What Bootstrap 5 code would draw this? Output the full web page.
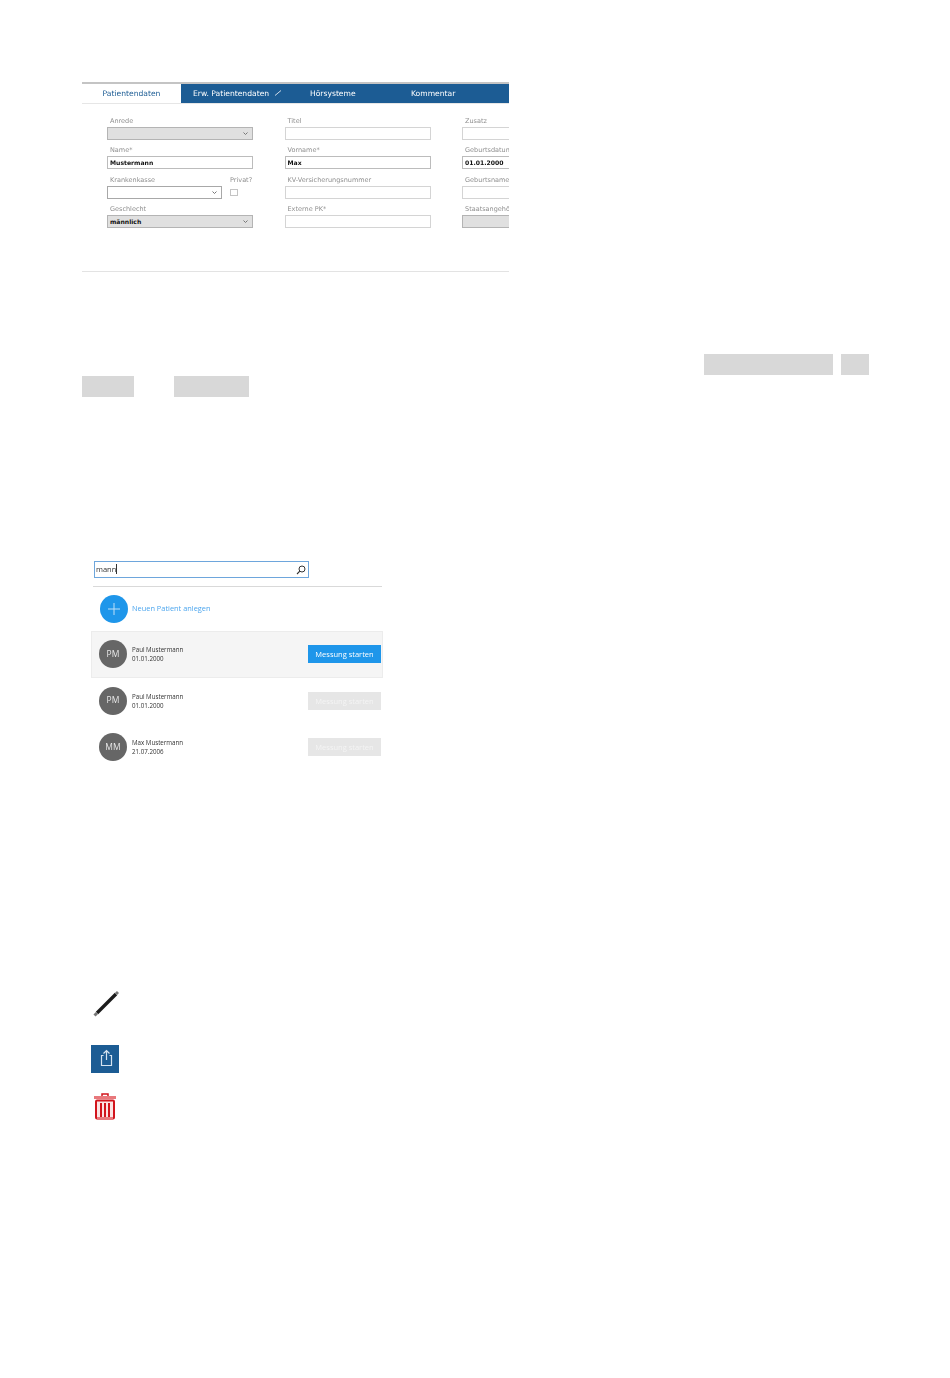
<!DOCTYPE html>
<html lang="de">

<head>
    <meta charset="UTF-8" />
    <meta name="viewport" content="width=device-width, initial-scale=1" />
    <title>Patientendaten</title>
    <link href="https://cdn.jsdelivr.net/npm/bootstrap@5.3.3/dist/css/bootstrap.min.css" rel="stylesheet" />
    <style>
        body {
            background: #fff;
            font-family: "DejaVu Sans", sans-serif;
        }

        .page-wrap {
            padding: 82px 0 0 82px;
        }

        /* the source picture is a scaled down screenshot, so everything is a bit soft */
        .soft-edge {
            filter: blur(0.4px);
        }

        /* Patient form panel */
        .patient-panel {
            width: 427px;
            height: 190px;
            border-bottom: 1px solid #e3e3e3;
            overflow: hidden;
        }

        .tab-strip {
            height: 22px;
            border-top: 2px solid #c4c4c4;
            border-bottom: 1px solid #e6e6e6;
            font-size: 7.6px;
        }

        .tab-first {
            width: 99px;
            color: #1c5c94;
            text-align: center;
            line-height: 19px;
        }

        .tab-rest {
            flex: 1;
            background: #1c5c94;
            color: #fff;
            line-height: 19px;
            position: relative;
        }

        .tab-rest span {
            position: absolute;
            top: 0;
            white-space: nowrap;
        }

        .form-area {
            padding: 12px 0 0 25px;
            display: grid;
            grid-template-columns: 146px 146px 146px;
            column-gap: 31.5px;
            row-gap: 5.3px;
        }

        .fld label {
            display: block;
            font-size: 6.5px;
            line-height: 10px;
            height: 11px;
            padding-left: 3px;
            color: #8f8f8f;
            white-space: nowrap;
        }

        .fld-box {
            height: 13px;
            border: 1px solid #d4d4d4;
            font-size: 6.1px;
            font-weight: 700;
            line-height: 11px;
            padding-left: 2px;
            color: #111;
            position: relative;
            will-change: opacity;
        }

        .fld-box.dark {
            border-color: #bcbcbc;
        }

        .fld-box.combo {
            background: #e0e0e0;
            border-color: #b4b4b4;
        }

        .fld-box.plain-combo {
            border-color: #a8a8a8;
        }

        .caret-mark {
            position: absolute;
            right: 4px;
            top: 3px;
            width: 5px;
            height: 5px;
        }

        .split-fld {
            display: flex;
        }

        .split-fld .fld-main {
            width: 115px;
        }

        .split-fld .fld-side {
            width: 24px;
            margin-left: 7px;
        }

        .split-fld .fld-side label {
            padding-left: 1px;
        }

        .tick-box {
            width: 8px;
            height: 7px;
            border: 1px solid #c4c4c4;
            margin: 3px 0 0 1px;
        }

        /* Redacted text blocks */
        .redact-rows {
            margin-top: 82px;
            width: 787px;
        }

        .redact-line {
            display: flex;
            height: 21px;
            margin-bottom: 1px;
        }

        .redact {
            background: #d8d8d8;
            height: 21px;
        }

        .r-a { width: 129px; margin-left: 622px; }
        .r-b { width: 28px; margin-left: 8px; }
        .r-c { width: 52px; }
        .r-d { width: 75px; margin-left: 40px; }

        /* Patient search */
        .search-panel {
            margin-top: 164px;
            margin-left: 9px;
            width: 292px;
            font-family: "Open Sans", sans-serif;
        }

        .search-box {
            width: 215px;
            height: 17px;
            margin-left: 3px;
            border: 1px solid #6ea6dc;
            font-size: 7.5px;
            line-height: 15px;
            padding: 0 2px 0 1px;
            color: #333;
        }

        .caret-bar {
            display: inline-block;
            width: 1px;
            height: 10px;
            background: #333;
            vertical-align: -2px;
        }

        .search-rule {
            height: 1px;
            background: #d9d9d9;
            margin: 8px 1px 8px 2px;
        }

        .add-row {
            height: 28px;
            padding-left: 9px;
            margin-bottom: 8px;
            color: #4da6ee;
            font-size: 7.4px;
        }

        .add-circle {
            width: 28px;
            height: 28px;
            border-radius: 50%;
            background: #1e96ea;
            margin-right: 4px;
        }

        .person-row {
            height: 46.5px;
            padding: 0 1px 0 7px;
            border: 1px solid transparent;
        }

        .person-row.active-row {
            background: #f5f5f5;
            border-color: #ececec;
        }

        .avatar-dot {
            width: 28px;
            height: 28px;
            border-radius: 50%;
            background: #666;
            color: #e8e8e8;
            font-size: 8.5px;
            margin-right: 5px;
            flex-shrink: 0;
        }

        .person-text {
            font-size: 6.2px;
            line-height: 9px;
            color: #333;
            flex: 1;
        }

        .start-btn {
            width: 73px;
            height: 18px;
            background: #e6e6e6;
            color: #f4f4f4;
            font-size: 7.5px;
            line-height: 18px;
            text-align: center;
        }

        .start-btn.on {
            background: #1e96ea;
            color: #fff;
        }

        /* Icon legend */
        .icon-stack {
            margin-top: 219px;
            margin-left: 9px;
        }

        .pencil-icon {
            display: block;
            width: 28px;
            height: 28px;
        }

        .share-icon {
            display: block;
            width: 28px;
            height: 28px;
            margin-top: 27px;
        }

        .bin-icon {
            display: block;
            width: 22px;
            height: 27px;
            margin: 20px 0 0 3px;
        }
    </style>
</head>

<body>
    <div class="page-wrap">
        <div class="patient-panel soft-edge">
            <div class="tab-strip d-flex">
                <div class="tab-first">Patientendaten</div>
                <div class="tab-rest">
                    <span style="left: 12px">Erw. Patientendaten</span>
                    <svg width="8" height="8" viewBox="0 0 8 8" style="position:absolute;left:93px;top:5px">
                        <path d="M1 6.5 7 1.5" stroke="#cfdbe8" stroke-width="1" />
                    </svg>
                    <span style="left: 129px">Hörsysteme</span>
                    <span style="left: 230px">Kommentar</span>
                </div>
            </div>
            <div class="form-area">
                <div class="fld"><label>Anrede</label>
                    <div class="fld-box combo"><svg class="caret-mark" viewBox="0 0 5 5"><path d="M.5 1.5 2.5 3.5 4.5 1.5" fill="none" stroke="#777" /></svg></div>
                </div>
                <div class="fld"><label>Titel</label>
                    <div class="fld-box"></div>
                </div>
                <div class="fld"><label>Zusatz</label>
                    <div class="fld-box"></div>
                </div>

                <div class="fld"><label>Name*</label>
                    <div class="fld-box dark">Mustermann</div>
                </div>
                <div class="fld"><label>Vorname*</label>
                    <div class="fld-box dark">Max</div>
                </div>
                <div class="fld"><label>Geburtsdatum</label>
                    <div class="fld-box dark">01.01.2000</div>
                </div>

                <div class="fld split-fld">
                    <div class="fld-main"><label>Krankenkasse</label>
                        <div class="fld-box plain-combo"><svg class="caret-mark" viewBox="0 0 5 5"><path d="M.5 1.5 2.5 3.5 4.5 1.5" fill="none" stroke="#777" /></svg></div>
                    </div>
                    <div class="fld-side"><label>Privat?</label>
                        <div class="tick-box"></div>
                    </div>
                </div>
                <div class="fld"><label>KV-Versicherungsnummer</label>
                    <div class="fld-box"></div>
                </div>
                <div class="fld"><label>Geburtsname</label>
                    <div class="fld-box"></div>
                </div>

                <div class="fld"><label>Geschlecht</label>
                    <div class="fld-box combo">männlich<svg class="caret-mark" viewBox="0 0 5 5"><path d="M.5 1.5 2.5 3.5 4.5 1.5" fill="none" stroke="#777" /></svg></div>
                </div>
                <div class="fld"><label>Externe PK*</label>
                    <div class="fld-box"></div>
                </div>
                <div class="fld"><label>Staatsangehörigkeit</label>
                    <div class="fld-box combo"></div>
                </div>
            </div>
        </div>

        <div class="redact-rows">
            <div class="redact-line">
                <div class="redact r-a"></div>
                <div class="redact r-b"></div>
            </div>
            <div class="redact-line">
                <div class="redact r-c"></div>
                <div class="redact r-d"></div>
            </div>
        </div>

        <div class="search-panel soft-edge">
            <div class="search-box d-flex justify-content-between align-items-center">
                <div>mann<span class="caret-bar"></span></div>
                <svg width="10" height="10" viewBox="0 0 10 10">
                    <circle cx="6" cy="4" r="3" fill="none" stroke="#333" />
                    <path d="M3.8 6.2 1 9" stroke="#333" stroke-width="1.1" />
                </svg>
            </div>
            <div class="search-rule"></div>
            <div class="add-row d-flex align-items-center">
                <div class="add-circle d-flex align-items-center justify-content-center">
                    <svg width="12" height="12" viewBox="0 0 12 12">
                        <path d="M6 0V12M0 6H12" stroke="#bfe0f8" stroke-width="1" />
                    </svg>
                </div>
                <div>Neuen Patient anlegen</div>
            </div>
            <div class="person-row active-row d-flex align-items-center">
                <div class="avatar-dot d-flex align-items-center justify-content-center">PM</div>
                <div class="person-text">Paul Mustermann<br />01.01.2000</div>
                <div class="start-btn on">Messung starten</div>
            </div>
            <div class="person-row d-flex align-items-center">
                <div class="avatar-dot d-flex align-items-center justify-content-center">PM</div>
                <div class="person-text">Paul Mustermann<br />01.01.2000</div>
                <div class="start-btn">Messung starten</div>
            </div>
            <div class="person-row d-flex align-items-center">
                <div class="avatar-dot d-flex align-items-center justify-content-center">MM</div>
                <div class="person-text">Max Mustermann<br />21.07.2006</div>
                <div class="start-btn">Messung starten</div>
            </div>
        </div>

        <div class="icon-stack soft-edge">
            <svg class="pencil-icon" viewBox="0 0 28 28">
                <path d="M6 23 25 4" stroke="#1c1c1c" stroke-width="3.4" />
                <path d="M3.5 25.5 6 23M25 4 27 2" stroke="#777" stroke-width="3" />
            </svg>
            <svg class="share-icon" viewBox="0 0 28 28">
                <rect width="28" height="28" fill="#1c5c94" />
                <path d="M12.5 10.5H10.5V20.5H20.5V10.5H18.5M15.5 15V5.5M12.5 8.5 15.5 5.5 18.5 8.5" fill="none" stroke="#d5e3f0" stroke-width="1.2" />
            </svg>
            <svg class="bin-icon" viewBox="0 0 22 27">
                <path d="M8 3V1H14V3" fill="none" stroke="#d2141c" stroke-width="1.5" />
                <rect y="3" width="22" height="3" fill="#e8787c" />
                <rect x="2" y="7.5" width="18" height="18" rx="1" fill="#fbe3e3" stroke="#d2141c" stroke-width="2" />
                <path d="M7 10V24M11 10V24M15 10V24" stroke="#d2141c" stroke-width="2" />
                <rect x="3" y="25" width="16" height="2" fill="#e8787c" />
            </svg>
        </div>
    </div>

    <script src="https://cdn.jsdelivr.net/npm/bootstrap@5.3.3/dist/js/bootstrap.bundle.min.js"></script>
</body>

</html>
